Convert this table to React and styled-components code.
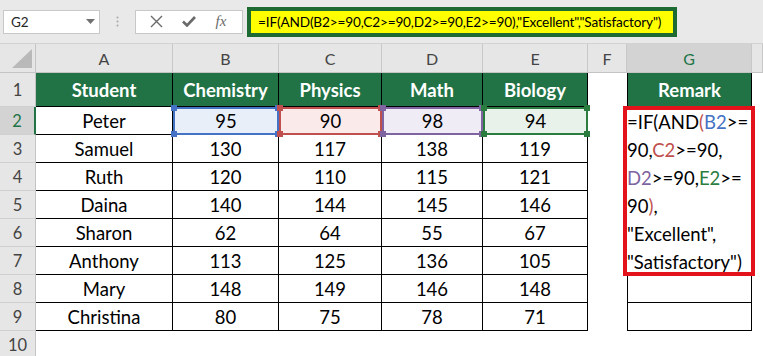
import React from 'react'
import styled, { createGlobalStyle } from 'styled-components'

const GlobalStyle = createGlobalStyle`
  html, body { margin: 0; padding: 0; background: #fff; }
  body { font-family: Lato, "Open Sans", sans-serif; overflow: hidden; }
`

const GREEN = '#217346'

const SUBJECTS = ['Chemistry', 'Physics', 'Math', 'Biology']
const STUDENTS = [
    ['Peter', 95, 90, 98, 94],
    ['Samuel', 130, 117, 138, 119],
    ['Ruth', 120, 110, 115, 121],
    ['Daina', 140, 144, 145, 146],
    ['Sharon', 62, 64, 55, 67],
    ['Anthony', 113, 125, 136, 105],
    ['Mary', 148, 149, 146, 148],
    ['Christina', 80, 75, 78, 71],
]
// colours Excel gives to each referenced range while editing
const REFS = [
    { fill: '#e9eff9', line: '#4472c4' },
    { fill: '#fbeaea', line: '#c0504d' },
    { fill: '#f0ecf6', line: '#8064a2' },
    { fill: '#e8f2ea', line: '#2a7d3f' },
]
const FORMULA = '=IF(AND(B2>=90,C2>=90,D2>=90,E2>=90),"Excellent","Satisfactory")'

function App() {
    return (
        <Page>
            <GlobalStyle />
            <Toolbar>
                <NameBox>
                    G2
                    <svg width="9" height="5" viewBox="0 0 9 5">
                        <path d="M0 0h9L4.5 5z" fill="#707070" />
                    </svg>
                </NameBox>
                <Grip>
                    <svg width="3" height="11" viewBox="0 0 3 11">
                        <circle cx="1.5" cy="1.5" r="1" fill="#a8a8a8" />
                        <circle cx="1.5" cy="5.5" r="1" fill="#a8a8a8" />
                        <circle cx="1.5" cy="9.5" r="1" fill="#a8a8a8" />
                    </svg>
                </Grip>
                <FxBox>
                    <svg width="13" height="13" viewBox="0 0 13 13">
                        <path d="M1 1l11 11M12 1L1 12" stroke="#6a6a6a" strokeWidth="1.4" fill="none" />
                    </svg>
                    <svg width="14" height="11" viewBox="0 0 14 11">
                        <path d="M1 5.5l4 4L13 1" stroke="#6a6a6a" strokeWidth="2.6" fill="none" />
                    </svg>
                    <FxLabel>fx</FxLabel>
                </FxBox>
                <FormulaBox>{FORMULA}</FormulaBox>
            </Toolbar>

            <Sheet>
                <Corner>
                    <svg width="20" height="19" viewBox="0 0 20 19">
                        <path d="M20 0v19H0z" fill="#b9b9b9" />
                    </svg>
                </Corner>
                {['A', 'B', 'C', 'D', 'E', 'F', 'G'].map(c => (
                    <ColHead key={c} $active={c === 'G'}>{c}</ColHead>
                ))}
                <ColHead />

                <RowHead>1</RowHead>
                <HeadCell>Student</HeadCell>
                {SUBJECTS.map(s => <HeadCell key={s}>{s}</HeadCell>)}
                <Blank />
                <HeadCell $edge>Remark</HeadCell>
                <Blank />

                {STUDENTS.map((row, i) => {
                    const n = i + 2
                    return (
                        <React.Fragment key={n}>
                            <RowHead $active={n === 2}>{n}</RowHead>
                            <Cell>{row[0]}</Cell>
                            {row.slice(1).map((v, j) =>
                                n === 2 ? (
                                    <RefCell key={j} $fill={REFS[j].fill} $line={REFS[j].line}>
                                        {v}
                                        <Handle $line={REFS[j].line} $v="top" $h="left" />
                                        <Handle $line={REFS[j].line} $v="top" $h="right" />
                                        <Handle $line={REFS[j].line} $v="bottom" $h="left" />
                                        <Handle $line={REFS[j].line} $v="bottom" $h="right" />
                                    </RefCell>
                                ) : (
                                    <Cell key={j}>{v}</Cell>
                                )
                            )}
                            <Blank />
                            {n === 2 && (
                                <EditCell>
                                    <Editor>
                                        <Line>=IF(AND<Ref $c="#c0504d">(</Ref><Ref $c="#4472c4">B2</Ref>&gt;=</Line>
                                        <Line>90,<Ref $c="#c0504d">C2</Ref>&gt;=90,</Line>
                                        <Line><Ref $c="#8064a2">D2</Ref>&gt;=90,<Ref $c="#2a7d3f">E2</Ref>&gt;=</Line>
                                        <Line>90<Ref $c="#c0504d">)</Ref>,</Line>
                                        <Line>"Excellent",</Line>
                                        <Line>"Satisfactory")</Line>
                                    </Editor>
                                </EditCell>
                            )}
                            {n > 7 && <Cell $edge />}
                            <Blank />
                        </React.Fragment>
                    )
                })}

                <RowHead>10</RowHead>
                <Blank />
            </Sheet>
        </Page>
    )
}

export default App

const Page = styled.div`
    width: 763px;
    height: 356px;
    overflow: hidden;
    background: #fff;
`

const Toolbar = styled.div`
    height: 44px;
    box-sizing: border-box;
    background: #e9e9e9;
    border-bottom: 1px solid #d2d2d2;
    display: flex;
    align-items: center;
    padding-left: 3px;
`

const NameBox = styled.div`
    width: 97px;
    height: 24px;
    box-sizing: border-box;
    background: #fff;
    border: 1px solid #c8c8c8;
    display: flex;
    align-items: center;
    justify-content: space-between;
    padding: 0 4px 0 7px;
    font-size: 13.5px;
    color: #262626;
`

const Grip = styled.div`
    width: 35px;
    display: flex;
    justify-content: center;
    align-items: center;
`

const FxBox = styled.div`
    width: 108px;
    height: 24px;
    box-sizing: border-box;
    background: #fff;
    border: 1px solid #c8c8c8;
    display: flex;
    align-items: center;
    justify-content: space-around;
    padding: 0 6px 0 4px;
`

const FxLabel = styled.span`
    font-family: "Liberation Serif", serif;
    font-style: italic;
    font-size: 15px;
    color: #6a6a6a;
`

const FormulaBox = styled.div`
    margin-left: 4px;
    width: 430px;
    height: 30px;
    box-sizing: border-box;
    border: 4px solid #1d6b33;
    background: #ffff00;
    display: flex;
    align-items: center;
    padding-left: 7px;
    font-size: 13.6px;
    letter-spacing: -0.15px;
    color: #000;
    white-space: nowrap;
    overflow: hidden;
`

const Sheet = styled.div`
    display: grid;
    grid-template-columns: 36px 137px 106px 103px 101px 105px 39px 125px 1fr;
    grid-template-rows: 29px 34px repeat(9, 28px);
    font-size: 18.5px;
    color: #000;
`

const Corner = styled.div`
    background: #e6e6e6;
    border-right: 1px solid #c4c4c4;
    border-bottom: 1px solid #c4c4c4;
    display: flex;
    align-items: flex-end;
    justify-content: flex-end;
    padding: 0 3px 4px 0;
`

const ColHead = styled.div`
    background: ${p => (p.$active ? '#d3d3d3' : '#e6e6e6')};
    color: ${p => (p.$active ? GREEN : '#444')};
    border-right: 1px solid #c8c8c8;
    border-bottom: 1px solid #c4c4c4;
    display: flex;
    align-items: center;
    justify-content: center;
    font-size: 16px;
`

const RowHead = styled.div`
    background: ${p => (p.$active ? '#d3d3d3' : '#e6e6e6')};
    color: ${p => (p.$active ? GREEN : '#444')};
    border-right: ${p => (p.$active ? `2px solid ${GREEN}` : '1px solid #c4c4c4')};
    border-bottom: 1px solid #d0d0d0;
    display: flex;
    align-items: center;
    justify-content: center;
    font-size: 16.5px;
`

const Cell = styled.div`
    border-right: 1px solid #000;
    border-bottom: 1px solid #000;
    border-left: ${p => (p.$edge ? '1px solid #000' : 'none')};
    display: flex;
    align-items: center;
    justify-content: center;
`

const HeadCell = styled(Cell)`
    background: ${GREEN};
    color: #fff;
    font-weight: 700;
`

const RefCell = styled(Cell)`
    position: relative;
    background: ${p => p.$fill};
    border: 2px solid ${p => p.$line};
`

const Handle = styled.span`
    position: absolute;
    width: 6px;
    height: 6px;
    background: ${p => p.$line};
    ${p => p.$v}: -4px;
    ${p => p.$h}: -4px;
    z-index: 1;
`

const Blank = styled.div``

const EditCell = styled.div`
    grid-row: span 6;
    position: relative;
`

const Editor = styled.div`
    position: absolute;
    top: -1px;
    left: -4px;
    right: -3px;
    bottom: -1px;
    z-index: 2;
    background: #fff;
    border: 4px solid #e3121b;
    font-size: 18.5px;
    white-space: nowrap;
`

const Line = styled.div`
    height: 28px;
    line-height: 28px;
    &:first-child { margin-top: -2px; }
`

const Ref = styled.span`
    color: ${p => p.$c};
`
